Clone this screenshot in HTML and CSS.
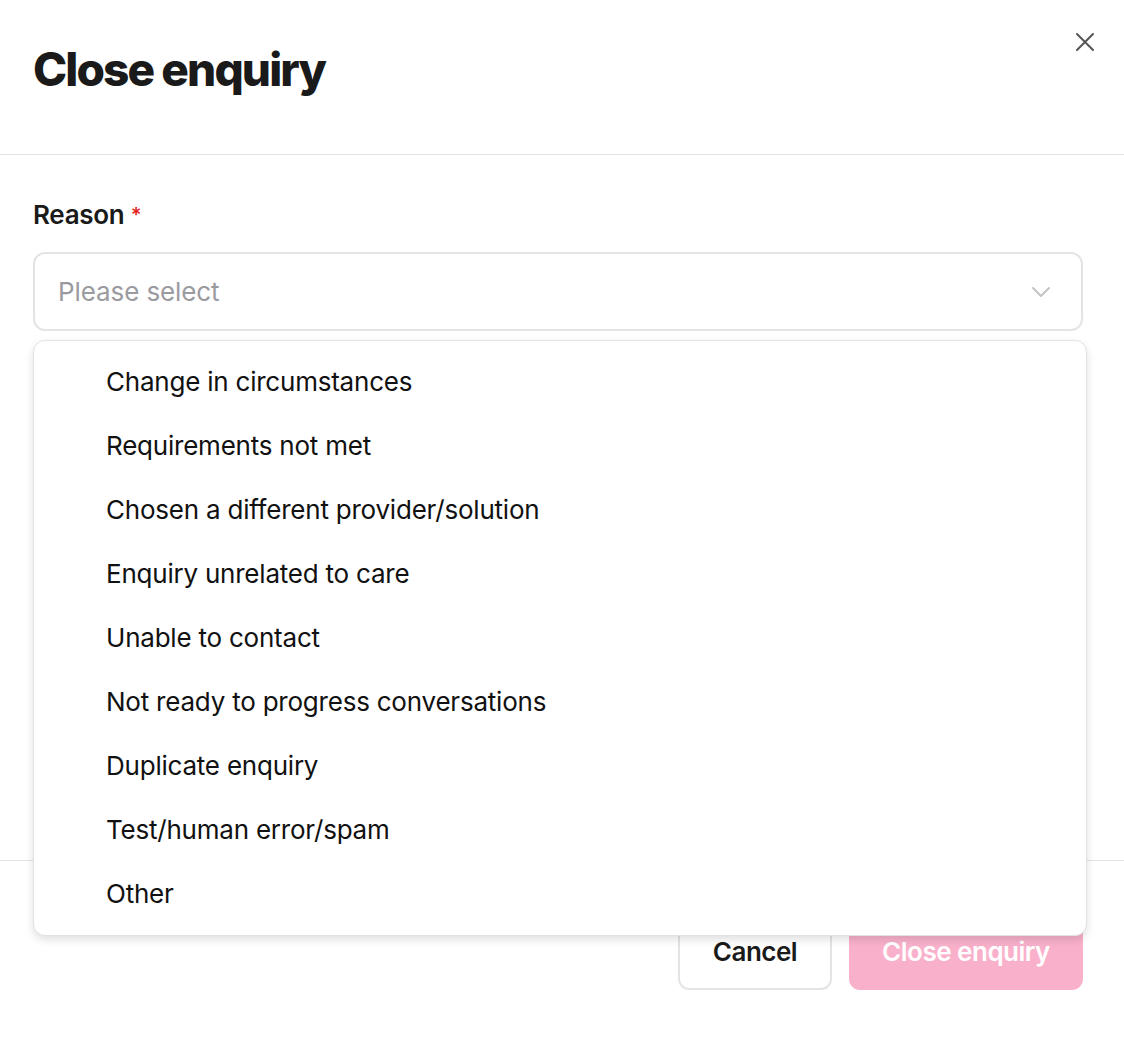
FILE: index.html
```html
<!DOCTYPE html>
<html>
<head>
<meta charset="utf-8">
<link rel="stylesheet" href="styles.css">
</head>
<body>
<div class="modal">
  <header class="modal-header">
    <h1 class="title">Close enquiry</h1>
    <button class="close-btn" aria-label="Close">
      <svg width="20" height="20" viewBox="0 0 20 20"><path d="M2 2 L18 18 M18 2 L2 18" stroke="#555" stroke-width="2" stroke-linecap="round" fill="none"/></svg>
    </button>
  </header>
  <main class="modal-body">
    <label class="field-label">Reason <span class="req">*</span></label>
    <div class="select-wrap">
      <div class="select">
        <span class="placeholder">Please select</span>
        <svg class="chevron" width="20" height="12" viewBox="0 0 20 12"><path d="M2 2 L10 10 L18 2" stroke="#c4c4c4" stroke-width="2" fill="none" stroke-linecap="round" stroke-linejoin="round"/></svg>
      </div>
      <ul class="menu">
        <li>Change in circumstances</li>
        <li>Requirements not met</li>
        <li>Chosen a different provider/solution</li>
        <li>Enquiry unrelated to care</li>
        <li>Unable to contact</li>
        <li>Not ready to progress conversations</li>
        <li>Duplicate enquiry</li>
        <li>Test/human error/spam</li>
        <li>Other</li>
      </ul>
    </div>
  </main>
  <footer class="modal-footer">
    <button class="btn btn-secondary">Cancel</button>
    <button class="btn btn-primary">Close enquiry</button>
  </footer>
</div>
</body>
</html>
```

FILE: styles.css
```css
* { box-sizing: border-box; }
html, body { margin: 0; padding: 0; background: #fff; }
body {
  font-family: Inter, "Noto Sans", sans-serif;
  color: #1a1a1a;
  width: 1124px;
  height: 1038px;
  overflow: hidden;
}
.modal { display: flex; flex-direction: column; height: 1038px; }
.modal-header {
  height: 155px;
  border-bottom: 1px solid #e3e3e3;
  display: flex;
  justify-content: space-between;
  align-items: flex-start;
  padding: 0 29px 0 33px;
}
.title {
  margin: 0;
  margin-top: 39px;
  font-size: 46px;
  font-weight: 800;
  letter-spacing: -1.9px;
  line-height: 60px;
  color: #1a1a1a;
}
.close-btn {
  margin-top: 32px;
  background: none;
  border: 0;
  padding: 0;
  width: 20px;
  height: 20px;
  cursor: pointer;
}
.modal-body {
  flex: 0 0 auto;
  height: 705px;
  padding: 44px 41px 0 33px;
}
.field-label {
  display: block;
  font-size: 26px;
  font-weight: 600;
  line-height: 32px;
  letter-spacing: -0.3px;
  color: #1a1a1a;
}
.req { color: #e02424; font-size: 20px; vertical-align: top; }
.select-wrap { position: relative; margin-top: 21px; }
.select {
  height: 79px;
  border: 2px solid #e4e4e4;
  border-radius: 12px;
  display: flex;
  align-items: center;
  justify-content: space-between;
  padding: 0 30px 0 23px;
}
.placeholder { font-size: 26px; color: #9b9b9f; letter-spacing: -0.1px; }
.chevron { display: block; }
.menu {
  position: absolute;
  top: 88px;
  left: 0;
  width: 1054px;
  margin: 0;
  padding: 9px 0;
  list-style: none;
  background: #fff;
  border: 1px solid #e2e2e2;
  border-radius: 12px;
  box-shadow: 0 4px 8px rgba(0,0,0,0.12);
  z-index: 10;
}
.menu li {
  height: 64px;
  line-height: 64px;
  padding-left: 72px;
  font-size: 26px;
  color: #111;
  letter-spacing: -0.22px;
}
.modal-footer {
  border-top: 1px solid #e3e3e3;
  display: flex;
  justify-content: flex-end;
  gap: 17px;
  padding: 52px 41px 0 33px;
}
.btn {
  height: 77px;
  border-radius: 11px;
  font-family: Inter, "Noto Sans", sans-serif;
  font-size: 26px;
  font-weight: 600;
  letter-spacing: -0.5px;
  cursor: pointer;
}
.btn-secondary {
  width: 154px;
  background: #fff;
  border: 2px solid #e4e4e4;
  color: #1a1a1a;
}
.btn-primary {
  width: 234px;
  background: #f9b1cb;
  border: 0;
  color: #fff;
}
```
